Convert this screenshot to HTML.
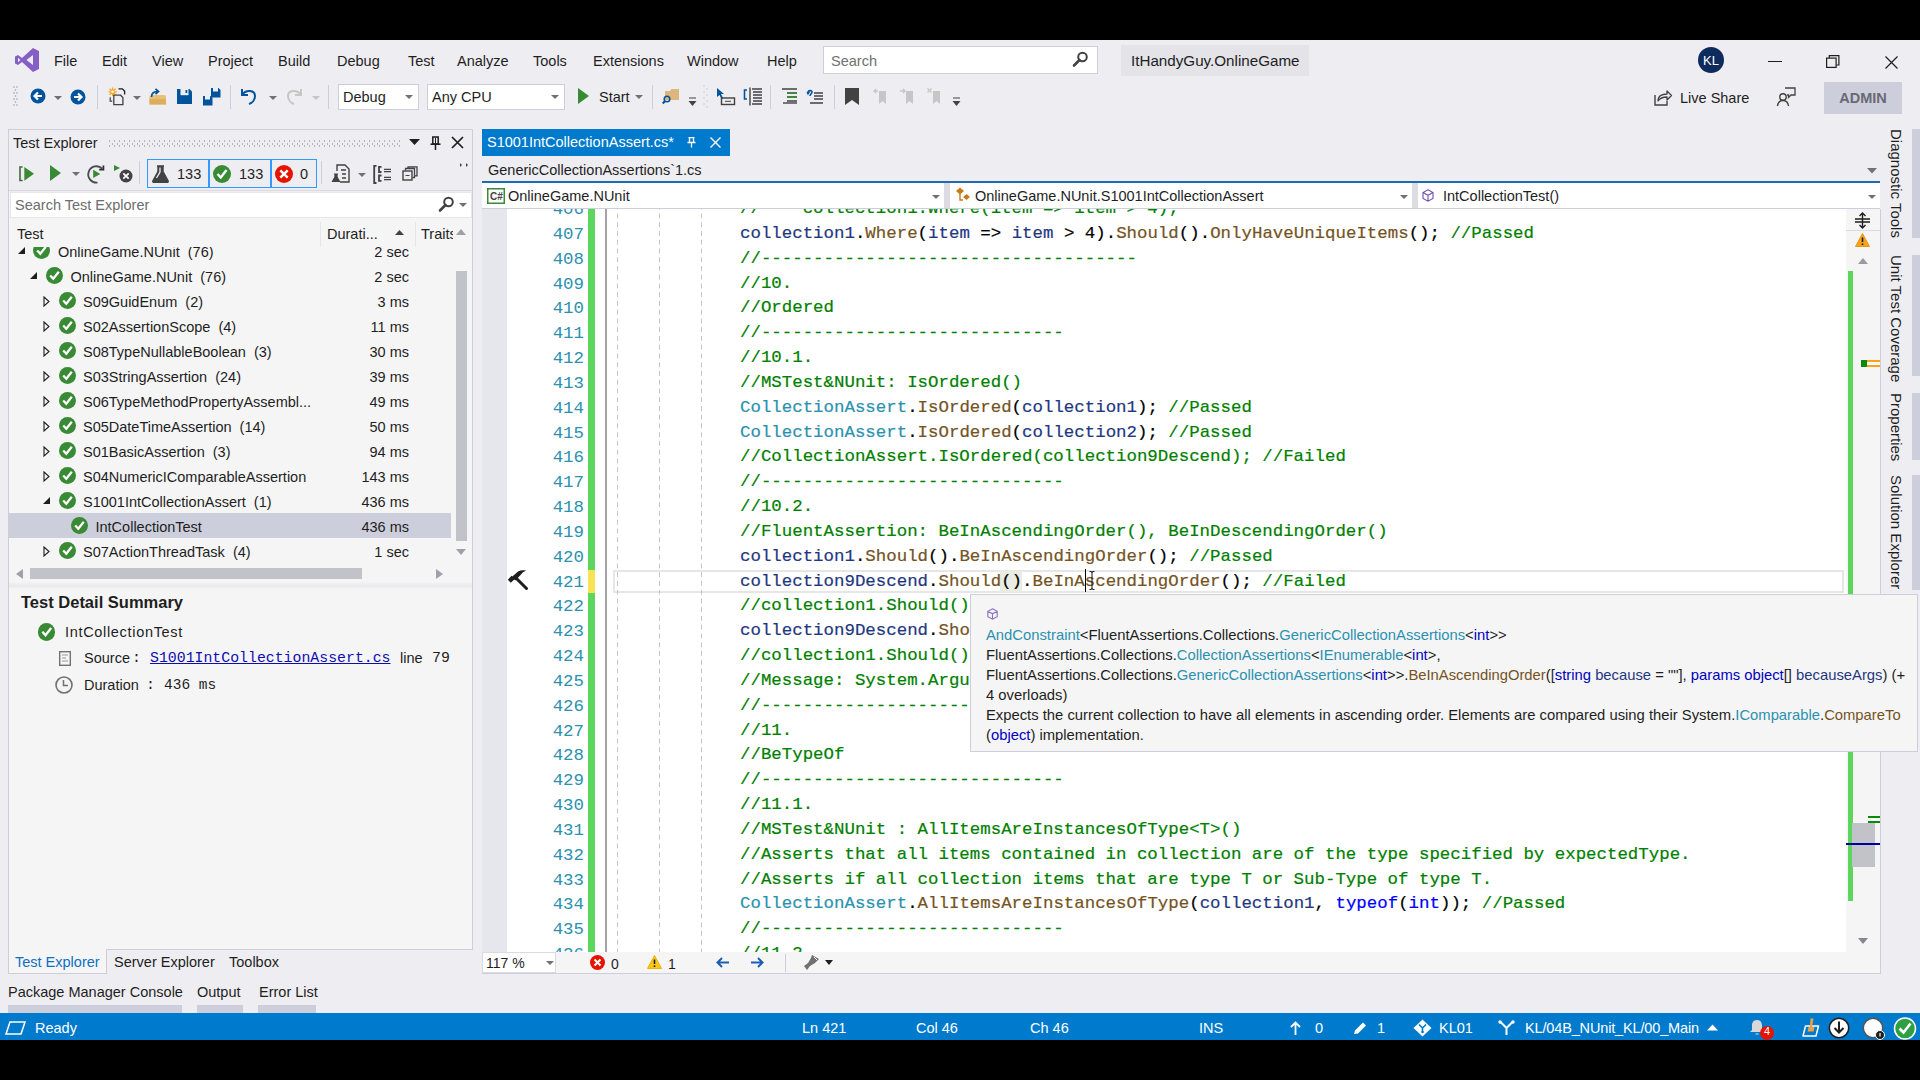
<!DOCTYPE html>
<html><head><meta charset="utf-8">
<style>
*{margin:0;padding:0;box-sizing:border-box}
html,body{width:1920px;height:1080px;overflow:hidden;background:#000}
body{position:relative;font-family:"Liberation Sans",sans-serif;color:#1E1E1E}
.a{position:absolute}
.t{position:absolute;white-space:pre;line-height:20px;font-size:14.5px}
svg{position:absolute;overflow:visible}
#chrome{position:absolute;left:0;top:40px;width:1920px;height:1000px;background:#EEEEF2}
.code{position:absolute;font-family:"Liberation Mono",monospace;font-size:17.42px;-webkit-text-stroke:0.2px currentColor;white-space:pre;line-height:25px;left:258px}
.ln{position:absolute;font-family:"Liberation Mono",monospace;font-size:17.42px;white-space:pre;line-height:25px;color:#2B91AF;text-align:right;width:80px;left:22px}
.id{color:#1F377F}.m{color:#74531F}.c{color:#008000}.k{color:#0000FF}.ty{color:#2B91AF}.p{color:#000}
.dd{position:absolute;width:0;height:0;border-left:4px solid transparent;border-right:4px solid transparent;border-top:4px solid #717171}
.sep{position:absolute;width:1px;height:24px;background:#CCCEDB}
.row{position:absolute;left:0;width:440px;height:25px}
.ck{position:absolute;width:17px;height:17px;border-radius:50%;background:#388A34}
.ck:after{content:"";position:absolute;left:5px;top:2.5px;width:4px;height:8px;border:solid #fff;border-width:0 2.4px 2.4px 0;transform:rotate(40deg)}
.tri{position:absolute;width:0;height:0}
.tl{position:absolute;left:0;white-space:pre}
.tc{position:absolute;font-size:15px;white-space:pre;line-height:20px}
</style></head><body>
<div id="chrome"></div>
<!-- ===== MENU BAR ===== -->
<svg style="left:15px;top:47px" width="25" height="26" viewBox="0 0 25 26">
<path d="M18 1 L24 4 V22 L18 25 L7 15 L3 18 L0 16.5 V9.5 L3 8 L7 11 Z M18 8 L11.5 13 L18 18 Z M3 10.8 V15.2 L5.4 13 Z" fill="#865FC5" fill-rule="evenodd"/>
</svg>
<div class="t" style="left:54px;top:51px">File</div>
<div class="t" style="left:102px;top:51px">Edit</div>
<div class="t" style="left:152px;top:51px">View</div>
<div class="t" style="left:208px;top:51px">Project</div>
<div class="t" style="left:278px;top:51px">Build</div>
<div class="t" style="left:337px;top:51px">Debug</div>
<div class="t" style="left:408px;top:51px">Test</div>
<div class="t" style="left:457px;top:51px">Analyze</div>
<div class="t" style="left:533px;top:51px">Tools</div>
<div class="t" style="left:593px;top:51px">Extensions</div>
<div class="t" style="left:687px;top:51px">Window</div>
<div class="t" style="left:767px;top:51px">Help</div>
<div class="a" style="left:823px;top:46px;width:275px;height:28px;background:#fff;border:1px solid #CCCEDB"></div>
<div class="t" style="left:831px;top:51px;color:#717171">Search</div>
<svg style="left:1071px;top:51px" width="18" height="18" viewBox="0 0 18 18"><circle cx="11.5" cy="6" r="4.3" fill="none" stroke="#424242" stroke-width="2"/><path d="M8.5 9 L3 14.5" stroke="#424242" stroke-width="2.6" stroke-linecap="round"/></svg>
<div class="a" style="left:1121px;top:45px;width:188px;height:31px;background:#E3E3E8"></div>
<div class="t" style="left:1131px;top:51px;font-size:15.2px">ItHandyGuy.OnlineGame</div>
<div class="a" style="left:1698px;top:47px;width:26px;height:26px;border-radius:50%;background:#0E2B5E"></div>
<div class="t" style="left:1702px;top:51px;font-size:13px;color:#fff;width:18px;text-align:center">KL</div>
<div class="a" style="left:1768px;top:61px;width:14px;height:1px;background:#1E1E1E"></div>
<svg style="left:1826px;top:55px" width="14" height="13" viewBox="0 0 14 13"><rect x="0.6" y="3.1" width="9.5" height="9.3" fill="none" stroke="#1E1E1E" stroke-width="1.2"/><path d="M3.3 3 V0.6 H12.9 V10 H10.2" fill="none" stroke="#1E1E1E" stroke-width="1.2"/></svg>
<svg style="left:1885px;top:56px" width="13" height="13" viewBox="0 0 13 13"><path d="M0.5 0.5 L12.5 12.5 M12.5 0.5 L0.5 12.5" stroke="#1E1E1E" stroke-width="1.2"/></svg>

<!-- ===== TOOLBAR ===== -->
<svg style="left:13px;top:86px" width="6" height="22" viewBox="0 0 6 22"><g fill="#A0A0A8"><circle cx="1" cy="1" r=".8"/><circle cx="4" cy="1" r=".8"/><circle cx="2.5" cy="4" r=".8"/><circle cx="1" cy="7" r=".8"/><circle cx="4" cy="7" r=".8"/><circle cx="2.5" cy="10" r=".8"/><circle cx="1" cy="13" r=".8"/><circle cx="4" cy="13" r=".8"/><circle cx="2.5" cy="16" r=".8"/><circle cx="1" cy="19" r=".8"/><circle cx="4" cy="19" r=".8"/></g></svg>
<svg style="left:30px;top:88px" width="16" height="16" viewBox="0 0 16 16"><circle cx="8" cy="8" r="7.5" fill="#00539C"/><path d="M12 8 H5 M8 4.5 L4.5 8 L8 11.5" fill="none" stroke="#fff" stroke-width="2.2"/></svg>
<div class="dd" style="left:54px;top:96px"></div>
<svg style="left:70px;top:89px" width="16" height="16" viewBox="0 0 16 16"><circle cx="8" cy="8" r="7.5" fill="#00539C"/><path d="M4 8 H11 M8 4.5 L11.5 8 L8 11.5" fill="none" stroke="#fff" stroke-width="2.2"/></svg>
<div class="sep" style="left:97px;top:85px"></div>
<svg style="left:104px;top:84px" width="24" height="26" viewBox="0 0 24 26"><g stroke="#F5A623" stroke-width="1.3"><path d="M8.6 3.6 V12 M4.4 7.8 H12.8 M5.6 4.8 L11.6 10.8 M11.6 4.8 L5.6 10.8"/></g><circle cx="8.6" cy="7.8" r="1.3" fill="#FFF5D0"/><path d="M14.5 4.8 H18.3 L20.6 7.1 V10.5" fill="none" stroke="#1E1E1E" stroke-width="1.3"/><path d="M9.8 11.2 H16.6 L18.9 13.5 V20.6 H9.8 Z" fill="#EEEEF2" stroke="#424242" stroke-width="1.3"/><path d="M6.2 13.2 V17.2 H8.2" fill="none" stroke="#424242" stroke-width="1.2"/></svg>
<div class="dd" style="left:133px;top:96px"></div>
<svg style="left:148px;top:87px" width="20" height="19" viewBox="0 0 20 19"><path d="M1.5 10 Q1.5 8 3.5 8 H16 Q18 8 18 10 V17.5 H1.5 Z" fill="#E8C07A"/><path d="M1.5 12 H18 V17.5 H1.5 Z" fill="#DDAE5E"/><path d="M3.5 10 C3.5 6 6 4.5 10 4.5 M7.5 1.8 L10.5 4.5 L7.5 7.2" fill="none" stroke="#00539C" stroke-width="1.7"/></svg>
<svg style="left:177px;top:89px" width="16" height="16" viewBox="0 0 16 16"><path d="M0 0 H12.5 L15 2.5 V15 H0 Z" fill="#00539C"/><rect x="3.5" y="0" width="8" height="6.2" fill="#EEEEF2"/><rect x="8.5" y="1" width="1.8" height="3" fill="#00539C"/></svg>
<svg style="left:202px;top:87px" width="19" height="19" viewBox="0 0 19 19"><path d="M9 1 H16.5 L18.5 3 V10.5 H9 Z" fill="#00539C"/><rect x="11" y="1" width="5" height="3.5" fill="#EEEEF2"/><path d="M1 9 H8.5 L10.5 11 V18.5 H1 Z" fill="#00539C"/><rect x="3" y="9" width="5" height="3.5" fill="#EEEEF2"/></svg>
<div class="sep" style="left:230px;top:85px"></div>
<svg style="left:240px;top:87px" width="17" height="18" viewBox="0 0 17 18"><path d="M2 2 V8 H8 M2 8 C6 2 15 3 15 9 C15 13 12 16 9 17" fill="none" stroke="#00539C" stroke-width="2"/></svg>
<div class="dd" style="left:269px;top:96px"></div>
<svg style="left:286px;top:87px" width="17" height="18" viewBox="0 0 17 18"><path d="M15 2 V8 H9 M15 8 C11 2 2 3 2 9 C2 13 5 16 8 17" fill="none" stroke="#C6C6C6" stroke-width="2"/></svg>
<div class="dd" style="left:312px;top:96px;border-top-color:#C6C6C6"></div>
<div class="sep" style="left:328px;top:85px"></div>
<div class="a" style="left:338px;top:84px;width:81px;height:26px;background:#fff;border:1px solid #CCCEDB"></div>
<div class="t" style="left:343px;top:87px">Debug</div>
<div class="dd" style="left:405px;top:95px"></div>
<div class="a" style="left:427px;top:84px;width:138px;height:26px;background:#fff;border:1px solid #CCCEDB"></div>
<div class="t" style="left:432px;top:87px">Any CPU</div>
<div class="dd" style="left:551px;top:95px"></div>
<svg style="left:578px;top:88px" width="11" height="16" viewBox="0 0 11 16"><path d="M0 0 L11 8 L0 16 Z" fill="#388A34"/></svg>
<div class="t" style="left:599px;top:87px">Start</div>
<div class="dd" style="left:635px;top:95px"></div>
<div class="sep" style="left:652px;top:85px"></div>
<svg style="left:662px;top:87px" width="18" height="18" viewBox="0 0 18 18"><path d="M3 4 H8 L9.5 2 H17 V13 H3 Z" fill="#DCB67A"/><circle cx="5" cy="12" r="2.8" fill="none" stroke="#00539C" stroke-width="1.5"/><path d="M3 14 L0.8 16.5" stroke="#00539C" stroke-width="2"/></svg>
<svg style="left:688px;top:97px" width="9" height="10" viewBox="0 0 9 10"><path d="M1 1 H8" stroke="#424242" stroke-width="1"/><path d="M0.5 4 H8.5 L4.5 9 Z" fill="#424242"/></svg>
<svg style="left:703px;top:85px" width="5" height="24" viewBox="0 0 5 24"><g fill="#BDBDC5"><circle cx="1" cy="1" r=".7"/><circle cx="4" cy="4" r=".7"/><circle cx="1" cy="7" r=".7"/><circle cx="4" cy="10" r=".7"/><circle cx="1" cy="13" r=".7"/><circle cx="4" cy="16" r=".7"/><circle cx="1" cy="19" r=".7"/><circle cx="4" cy="22" r=".7"/></g></svg>
<svg style="left:716px;top:87px" width="20" height="19" viewBox="0 0 20 19"><path d="M1 1 L1 10 L3.5 8 L5.5 12 L7 11 L5 7 L8 7 Z" fill="#00539C"/><rect x="5.5" y="11" width="13" height="6.5" fill="none" stroke="#424242" stroke-width="1.4"/><path d="M9 14.3 H15" stroke="#424242" stroke-width="1"/></svg>
<svg style="left:743px;top:87px" width="20" height="19" viewBox="0 0 20 19"><path d="M4 3 H1.5 V12 H4" fill="none" stroke="#00539C" stroke-width="1.6"/><path d="M7 0.5 V18.5" stroke="#424242" stroke-width="1.4"/><path d="M9 2 H19 M10 5 H19 M10 8 H19 M10 11 H19 M10 14 H19 M9 17 H19" stroke="#424242" stroke-width="1.3"/></svg>
<div class="sep" style="left:770px;top:85px"></div>
<svg style="left:781px;top:88px" width="17" height="16" viewBox="0 0 17 16"><path d="M1 1 H16 M6 5 H16 M6 9 H16 M6 13 H16" stroke="#424242" stroke-width="1.4"/><path d="M6 5 H16 M6 9 H16" stroke="#388A34" stroke-width="1.4"/><path d="M2 15 H16" stroke="#424242" stroke-width="1.4"/></svg>
<svg style="left:806px;top:88px" width="18" height="16" viewBox="0 0 18 16"><path d="M2 5 C2 2 6 2 6 4 C6 6 4 6 4 8" fill="none" stroke="#00539C" stroke-width="1.6"/><path d="M1 4 L2 6 L3.5 4" fill="none" stroke="#00539C" stroke-width="1.2"/><path d="M8 5 H17 M8 8 H17 M8 11 H17 M4 15 H17" stroke="#424242" stroke-width="1.4"/></svg>
<div class="sep" style="left:834px;top:85px"></div>
<svg style="left:845px;top:88px" width="14" height="17" viewBox="0 0 14 17"><path d="M0 0 H14 V17 L7 12 L0 17 Z" fill="#424242"/></svg>
<svg style="left:873px;top:88px" width="15" height="17" viewBox="0 0 15 17"><path d="M6 3 H13 V16 L9.5 13 L6 16 Z" fill="#C6C6C6"/><path d="M5 3 H1 M3 1 L1 3 L3 5" fill="none" stroke="#C6C6C6" stroke-width="1.4"/></svg>
<svg style="left:900px;top:88px" width="15" height="17" viewBox="0 0 15 17"><path d="M6 3 H13 V16 L9.5 13 L6 16 Z" fill="#C6C6C6"/><path d="M0 3 H5 M3 1 L5 3 L3 5" fill="none" stroke="#C6C6C6" stroke-width="1.4"/></svg>
<svg style="left:927px;top:88px" width="15" height="17" viewBox="0 0 15 17"><path d="M6 3 H13 V16 L9.5 13 L6 16 Z" fill="#C6C6C6"/><path d="M0.5 0.5 L4.5 4.5 M4.5 0.5 L0.5 4.5" stroke="#C6C6C6" stroke-width="1.3"/></svg>
<svg style="left:952px;top:97px" width="9" height="10" viewBox="0 0 9 10"><path d="M1 1 H8" stroke="#424242" stroke-width="1"/><path d="M0.5 4 H8.5 L4.5 9 Z" fill="#424242"/></svg>
<!-- right side of toolbar -->
<svg style="left:1654px;top:89px" width="18" height="17" viewBox="0 0 18 17"><path d="M1 6 V16 H13 V12" fill="none" stroke="#424242" stroke-width="1.4"/><path d="M4 12 C4 7 8 5 13 5 V2 L17.5 6.5 L13 11 V8 C9 8 6 9 4 12 Z" fill="none" stroke="#424242" stroke-width="1.3" stroke-linejoin="round"/></svg>
<div class="t" style="left:1680px;top:88px">Live Share</div>
<svg style="left:1776px;top:87px" width="20" height="20" viewBox="0 0 20 20"><circle cx="7" cy="10" r="3.2" fill="none" stroke="#424242" stroke-width="1.4"/><path d="M1.5 19 C2 15 4 13.5 7 13.5 C10 13.5 12 15 12.5 19" fill="none" stroke="#424242" stroke-width="1.4"/><path d="M9 1 H19 V8 H15 L12.5 10.5 V8 H11" fill="none" stroke="#424242" stroke-width="1.3"/></svg>
<div class="a" style="left:1824px;top:82px;width:78px;height:32px;background:#CCCEDB"></div>
<div class="t" style="left:1824px;top:88px;width:78px;text-align:center;font-weight:bold;color:#696974;font-size:14.5px">ADMIN</div>
<!-- ===== TEST EXPLORER ===== -->
<div class="a" style="left:8px;top:129px;width:465px;height:821px;border:1px solid #CCCEDB;background:#F5F5F5"></div>
<div class="a" style="left:9px;top:130px;width:463px;height:62px;background:#EEEEF2"></div>
<div class="t" style="left:13px;top:133px">Test Explorer</div>
<div class="a" style="left:107px;top:140px;width:293px;height:2px;background-image:radial-gradient(circle,#B4B4BC 0.8px,transparent 1.1px);background-size:5px 2px"></div><div class="a" style="left:109.5px;top:142.5px;width:290px;height:2px;background-image:radial-gradient(circle,#B4B4BC 0.8px,transparent 1.1px);background-size:5px 2px"></div><div class="a" style="left:107px;top:145px;width:293px;height:2px;background-image:radial-gradient(circle,#B4B4BC 0.8px,transparent 1.1px);background-size:5px 2px"></div>
<svg style="left:409px;top:139px" width="11" height="7" viewBox="0 0 11 7"><path d="M0 0 H11 L5.5 6 Z" fill="#1E1E1E"/></svg>
<svg style="left:430px;top:136px" width="11" height="15" viewBox="0 0 11 15"><path d="M2.8 1 H8.2 V8 H2.8 Z" fill="none" stroke="#1E1E1E" stroke-width="1.5"/><path d="M5.5 1.5 V7.5" stroke="#1E1E1E" stroke-width="1"/><path d="M0.5 8.2 H10.5" stroke="#1E1E1E" stroke-width="1.6"/><path d="M5.5 8.5 V14" stroke="#1E1E1E" stroke-width="1.5"/></svg>
<svg style="left:451px;top:136px" width="13" height="13" viewBox="0 0 13 13"><path d="M1 1 L12 12 M12 1 L1 12" stroke="#1E1E1E" stroke-width="1.7"/></svg>
<!-- TE toolbar -->
<svg style="left:18px;top:166px" width="17" height="16" viewBox="0 0 17 16"><path d="M4.6 1 H2 V14.5 H4.6" fill="none" stroke="#3F6A3F" stroke-width="1.6"/><path d="M6.3 1 L16 7.8 L6.3 14.8 Z" fill="#388A34"/></svg>
<svg style="left:50px;top:165px" width="11" height="16" viewBox="0 0 11 16"><path d="M0 0 L11 8 L0 16 Z" fill="#388A34"/></svg>
<div class="dd" style="left:72px;top:172px"></div>
<svg style="left:87px;top:165px" width="18" height="19" viewBox="0 0 18 19"><path d="M10.5 17.6 A8.2 8.2 0 1 1 15.2 3.6" fill="none" stroke="#4A4A52" stroke-width="1.8"/><path d="M12.2 4.6 H16.4 V0.4" fill="none" stroke="#2E2E36" stroke-width="1.8"/><path d="M6.2 4.7 L13.3 8.9 L6.2 13 Z" fill="#388A34"/></svg>
<svg style="left:114px;top:164px" width="19" height="19" viewBox="0 0 19 19"><path d="M0 1 L6 4 L0 7 Z" fill="#388A34"/><circle cx="12" cy="12" r="6.5" fill="#424242"/><path d="M9.3 9.3 L14.7 14.7 M14.7 9.3 L9.3 14.7" stroke="#fff" stroke-width="1.8"/></svg>
<div class="sep" style="left:139px;top:161px;height:23px"></div>
<div class="a" style="left:147px;top:159px;width:170px;height:29px;border:1px solid #3399FF;background:#EEEEF2"></div>
<div class="a" style="left:208px;top:160px;width:2px;height:27px;background:#3399FF"></div>
<div class="a" style="left:270px;top:160px;width:2px;height:27px;background:#3399FF"></div>
<svg style="left:152px;top:165px" width="17" height="18" viewBox="0 0 17 18"><path d="M5 1 H12 M6 1 V6.5 L0.8 16 Q0.5 17.3 2 17.3 H15 Q16.5 17.3 16.2 16 L11 6.5 V1" fill="#424242" stroke="#424242" stroke-width="1.4" stroke-linejoin="round"/><path d="M8 2.5 V7 L4.5 13" fill="none" stroke="#EEEEF2" stroke-width="1.3"/></svg>
<div class="t" style="left:177px;top:164px">133</div>
<div class="a" style="left:213px;top:165px;width:18px;height:18px;border-radius:50%;background:#388A34"></div>
<svg style="left:213px;top:165px" width="18" height="18" viewBox="0 0 18 18"><path d="M4.5 9 L7.8 12.5 L13.5 5" fill="none" stroke="#fff" stroke-width="2.4"/></svg>
<div class="t" style="left:239px;top:164px">133</div>
<div class="a" style="left:275px;top:165px;width:18px;height:18px;border-radius:50%;background:#E51400"></div>
<svg style="left:275px;top:165px" width="18" height="18" viewBox="0 0 18 18"><path d="M5.3 5.3 L12.7 12.7 M12.7 5.3 L5.3 12.7" stroke="#fff" stroke-width="2.4"/></svg>
<div class="t" style="left:300px;top:164px">0</div>
<div class="sep" style="left:321px;top:161px;height:23px"></div>
<svg style="left:332px;top:164px" width="19" height="19" viewBox="0 0 19 19"><path d="M5 7 V1 H13 L17 5 V18 H8" fill="none" stroke="#424242" stroke-width="1.4"/><path d="M9 6 H14 M10 10 H14 M10 14 H14" stroke="#424242" stroke-width="1.3"/><path d="M2 10 H6 M3 10 V13 L0.5 17.5 H7.5 L5 13 V10" fill="#424242" stroke="#424242" stroke-width="1.2"/></svg>
<div class="dd" style="left:358px;top:173px"></div>
<svg style="left:373px;top:165px" width="19" height="19" viewBox="0 0 19 19"><path d="M3.5 0.8 H1.2 V18 H3.5" fill="none" stroke="#424242" stroke-width="1.8"/><path d="M8.5 1.8 H6 V7 H8.5 M8.5 10.5 H6 V15.8 H8.5" fill="none" stroke="#424242" stroke-width="1.8"/><path d="M11 4.3 H18 M11 6.6 H18 M11 12.3 H18 M11 14.6 H18" stroke="#424242" stroke-width="1.2"/></svg>
<svg style="left:402px;top:166px" width="16" height="15" viewBox="0 0 16 15"><rect x="1" y="5" width="9" height="9" fill="none" stroke="#424242" stroke-width="1.4"/><path d="M3.5 4.5 V2.5 H12.5 V11.5 H10.5 M6 2 V0.8 H15 V9.8 H13" fill="none" stroke="#424242" stroke-width="1.3"/><path d="M3.5 9.5 H7.5" stroke="#424242" stroke-width="1"/></svg>
<svg style="left:460px;top:163px" width="9" height="4" viewBox="0 0 9 4"><path d="M0 0 L2 2 L0 4 Z M6 0 L8 2 L6 4 Z" fill="#424242"/></svg>
<div class="a" style="left:9px;top:190px;width:463px;height:1px;background:#DADAE0"></div>
<!-- search -->
<div class="a" style="left:10px;top:192px;width:462px;height:26px;background:#fff;border:1px solid #E6E6EB"></div>
<div class="t" style="left:15px;top:195px;color:#6D6D6D">Search Test Explorer</div>
<svg style="left:437px;top:196px" width="18" height="18" viewBox="0 0 18 18"><circle cx="11.5" cy="6" r="4.3" fill="none" stroke="#424242" stroke-width="2"/><path d="M8.5 9 L3 14.5" stroke="#424242" stroke-width="2.6" stroke-linecap="round"/></svg>
<div class="dd" style="left:459px;top:203px"></div>
<!-- header -->
<div class="a" style="left:9px;top:219px;width:463px;height:28px;background:#F5F5F5"></div>
<div class="t" style="left:17px;top:224px">Test</div>
<div class="a" style="left:320px;top:222px;width:1px;height:25px;background:#E5E5EA"></div>
<div class="t" style="left:327px;top:224px">Durati...</div>
<svg style="left:395px;top:230px" width="9" height="5" viewBox="0 0 9 5"><path d="M0 5 L4.5 0 L9 5 Z" fill="#424242"/></svg>
<div class="a" style="left:415px;top:222px;width:1px;height:25px;background:#E5E5EA"></div>
<div class="t" style="left:421px;top:224px;width:32px;overflow:hidden">Traits</div>
<div class="a" style="left:9px;top:247px;width:446px;height:318px;overflow:hidden">
<svg style="left:8.5px;top:0px" width="8" height="8" viewBox="0 0 8 8"><path d="M7 0 V7 H0 Z" fill="#1E1E1E"/></svg>
<div class="a" style="left:24.2px;top:-4.699999999999999px;width:17px;height:17px;border-radius:50%;background:#388A34"></div>
<svg style="left:24.2px;top:-4.699999999999999px" width="17" height="17" viewBox="0 0 17 17"><path d="M4.2 8.5 L7.3 11.8 L12.8 4.8" fill="none" stroke="#fff" stroke-width="2.3"/></svg>
<div class="t" style="left:49.0px;top:-5px">OnlineGame.NUnit  (76)</div>
<div class="t" style="left:291px;top:-5px;width:109px;text-align:right">2 sec</div>
<svg style="left:21.0px;top:25px" width="8" height="8" viewBox="0 0 8 8"><path d="M7 0 V7 H0 Z" fill="#1E1E1E"/></svg>
<div class="a" style="left:36.9px;top:20.3px;width:17px;height:17px;border-radius:50%;background:#388A34"></div>
<svg style="left:36.9px;top:20.3px" width="17" height="17" viewBox="0 0 17 17"><path d="M4.2 8.5 L7.3 11.8 L12.8 4.8" fill="none" stroke="#fff" stroke-width="2.3"/></svg>
<div class="t" style="left:61.5px;top:20px">OnlineGame.NUnit  (76)</div>
<div class="t" style="left:291px;top:20px;width:109px;text-align:right">2 sec</div>
<svg style="left:33.5px;top:49px" width="7" height="11" viewBox="0 0 7 11"><path d="M1 1 L6 5.5 L1 10 Z" fill="none" stroke="#1E1E1E" stroke-width="1.1"/></svg>
<div class="a" style="left:49.6px;top:45.3px;width:17px;height:17px;border-radius:50%;background:#388A34"></div>
<svg style="left:49.6px;top:45.3px" width="17" height="17" viewBox="0 0 17 17"><path d="M4.2 8.5 L7.3 11.8 L12.8 4.8" fill="none" stroke="#fff" stroke-width="2.3"/></svg>
<div class="t" style="left:74.0px;top:45px">S09GuidEnum  (2)</div>
<div class="t" style="left:291px;top:45px;width:109px;text-align:right">3 ms</div>
<svg style="left:33.5px;top:74px" width="7" height="11" viewBox="0 0 7 11"><path d="M1 1 L6 5.5 L1 10 Z" fill="none" stroke="#1E1E1E" stroke-width="1.1"/></svg>
<div class="a" style="left:49.6px;top:70.3px;width:17px;height:17px;border-radius:50%;background:#388A34"></div>
<svg style="left:49.6px;top:70.3px" width="17" height="17" viewBox="0 0 17 17"><path d="M4.2 8.5 L7.3 11.8 L12.8 4.8" fill="none" stroke="#fff" stroke-width="2.3"/></svg>
<div class="t" style="left:74.0px;top:70px">S02AssertionScope  (4)</div>
<div class="t" style="left:291px;top:70px;width:109px;text-align:right">11 ms</div>
<svg style="left:33.5px;top:99px" width="7" height="11" viewBox="0 0 7 11"><path d="M1 1 L6 5.5 L1 10 Z" fill="none" stroke="#1E1E1E" stroke-width="1.1"/></svg>
<div class="a" style="left:49.6px;top:95.3px;width:17px;height:17px;border-radius:50%;background:#388A34"></div>
<svg style="left:49.6px;top:95.3px" width="17" height="17" viewBox="0 0 17 17"><path d="M4.2 8.5 L7.3 11.8 L12.8 4.8" fill="none" stroke="#fff" stroke-width="2.3"/></svg>
<div class="t" style="left:74.0px;top:95px">S08TypeNullableBoolean  (3)</div>
<div class="t" style="left:291px;top:95px;width:109px;text-align:right">30 ms</div>
<svg style="left:33.5px;top:124px" width="7" height="11" viewBox="0 0 7 11"><path d="M1 1 L6 5.5 L1 10 Z" fill="none" stroke="#1E1E1E" stroke-width="1.1"/></svg>
<div class="a" style="left:49.6px;top:120.3px;width:17px;height:17px;border-radius:50%;background:#388A34"></div>
<svg style="left:49.6px;top:120.3px" width="17" height="17" viewBox="0 0 17 17"><path d="M4.2 8.5 L7.3 11.8 L12.8 4.8" fill="none" stroke="#fff" stroke-width="2.3"/></svg>
<div class="t" style="left:74.0px;top:120px">S03StringAssertion  (24)</div>
<div class="t" style="left:291px;top:120px;width:109px;text-align:right">39 ms</div>
<svg style="left:33.5px;top:149px" width="7" height="11" viewBox="0 0 7 11"><path d="M1 1 L6 5.5 L1 10 Z" fill="none" stroke="#1E1E1E" stroke-width="1.1"/></svg>
<div class="a" style="left:49.6px;top:145.3px;width:17px;height:17px;border-radius:50%;background:#388A34"></div>
<svg style="left:49.6px;top:145.3px" width="17" height="17" viewBox="0 0 17 17"><path d="M4.2 8.5 L7.3 11.8 L12.8 4.8" fill="none" stroke="#fff" stroke-width="2.3"/></svg>
<div class="t" style="left:74.0px;top:145px">S06TypeMethodPropertyAssembl...</div>
<div class="t" style="left:291px;top:145px;width:109px;text-align:right">49 ms</div>
<svg style="left:33.5px;top:174px" width="7" height="11" viewBox="0 0 7 11"><path d="M1 1 L6 5.5 L1 10 Z" fill="none" stroke="#1E1E1E" stroke-width="1.1"/></svg>
<div class="a" style="left:49.6px;top:170.3px;width:17px;height:17px;border-radius:50%;background:#388A34"></div>
<svg style="left:49.6px;top:170.3px" width="17" height="17" viewBox="0 0 17 17"><path d="M4.2 8.5 L7.3 11.8 L12.8 4.8" fill="none" stroke="#fff" stroke-width="2.3"/></svg>
<div class="t" style="left:74.0px;top:170px">S05DateTimeAssertion  (14)</div>
<div class="t" style="left:291px;top:170px;width:109px;text-align:right">50 ms</div>
<svg style="left:33.5px;top:199px" width="7" height="11" viewBox="0 0 7 11"><path d="M1 1 L6 5.5 L1 10 Z" fill="none" stroke="#1E1E1E" stroke-width="1.1"/></svg>
<div class="a" style="left:49.6px;top:195.3px;width:17px;height:17px;border-radius:50%;background:#388A34"></div>
<svg style="left:49.6px;top:195.3px" width="17" height="17" viewBox="0 0 17 17"><path d="M4.2 8.5 L7.3 11.8 L12.8 4.8" fill="none" stroke="#fff" stroke-width="2.3"/></svg>
<div class="t" style="left:74.0px;top:195px">S01BasicAssertion  (3)</div>
<div class="t" style="left:291px;top:195px;width:109px;text-align:right">94 ms</div>
<svg style="left:33.5px;top:224px" width="7" height="11" viewBox="0 0 7 11"><path d="M1 1 L6 5.5 L1 10 Z" fill="none" stroke="#1E1E1E" stroke-width="1.1"/></svg>
<div class="a" style="left:49.6px;top:220.3px;width:17px;height:17px;border-radius:50%;background:#388A34"></div>
<svg style="left:49.6px;top:220.3px" width="17" height="17" viewBox="0 0 17 17"><path d="M4.2 8.5 L7.3 11.8 L12.8 4.8" fill="none" stroke="#fff" stroke-width="2.3"/></svg>
<div class="t" style="left:74.0px;top:220px">S04NumericIComparableAssertion</div>
<div class="t" style="left:291px;top:220px;width:109px;text-align:right">143 ms</div>
<svg style="left:33.5px;top:250px" width="8" height="8" viewBox="0 0 8 8"><path d="M7 0 V7 H0 Z" fill="#1E1E1E"/></svg>
<div class="a" style="left:49.6px;top:245.3px;width:17px;height:17px;border-radius:50%;background:#388A34"></div>
<svg style="left:49.6px;top:245.3px" width="17" height="17" viewBox="0 0 17 17"><path d="M4.2 8.5 L7.3 11.8 L12.8 4.8" fill="none" stroke="#fff" stroke-width="2.3"/></svg>
<div class="t" style="left:74.0px;top:245px">S1001IntCollectionAssert  (1)</div>
<div class="t" style="left:291px;top:245px;width:109px;text-align:right">436 ms</div>
<div class="a" style="left:0px;top:266px;width:442px;height:24.5px;background:#CCCEDB"></div>
<div class="a" style="left:61.7px;top:270.3px;width:17px;height:17px;border-radius:50%;background:#388A34"></div>
<svg style="left:61.7px;top:270.3px" width="17" height="17" viewBox="0 0 17 17"><path d="M4.2 8.5 L7.3 11.8 L12.8 4.8" fill="none" stroke="#fff" stroke-width="2.3"/></svg>
<div class="t" style="left:86.5px;top:270px">IntCollectionTest</div>
<div class="t" style="left:291px;top:270px;width:109px;text-align:right">436 ms</div>
<svg style="left:33.5px;top:299px" width="7" height="11" viewBox="0 0 7 11"><path d="M1 1 L6 5.5 L1 10 Z" fill="none" stroke="#1E1E1E" stroke-width="1.1"/></svg>
<div class="a" style="left:49.6px;top:295.3px;width:17px;height:17px;border-radius:50%;background:#388A34"></div>
<svg style="left:49.6px;top:295.3px" width="17" height="17" viewBox="0 0 17 17"><path d="M4.2 8.5 L7.3 11.8 L12.8 4.8" fill="none" stroke="#fff" stroke-width="2.3"/></svg>
<div class="t" style="left:74.0px;top:295px">S07ActionThreadTask  (4)</div>
<div class="t" style="left:291px;top:295px;width:109px;text-align:right">1 sec</div>
</div>
<!-- tree scrollbars -->
<svg style="left:456px;top:229px" width="10" height="6" viewBox="0 0 10 6"><path d="M0 6 L5 0 L10 6 Z" fill="#A0A0A8"/></svg>
<div class="a" style="left:456px;top:271px;width:11px;height:270px;background:#C2C3C9"></div>
<svg style="left:456px;top:549px" width="10" height="6" viewBox="0 0 10 6"><path d="M0 0 L5 6 L10 0 Z" fill="#A0A0A8"/></svg>
<svg style="left:16px;top:569px" width="7" height="10" viewBox="0 0 7 10"><path d="M7 0 L0 5 L7 10 Z" fill="#A0A0A8"/></svg>
<div class="a" style="left:30px;top:568px;width:332px;height:11px;background:#C2C3C9"></div>
<svg style="left:436px;top:569px" width="7" height="10" viewBox="0 0 7 10"><path d="M0 0 L7 5 L0 10 Z" fill="#A0A0A8"/></svg>
<div class="a" style="left:9px;top:582px;width:463px;height:7px;background:linear-gradient(#F5F5F5,#E9E9EE 55%,#F5F5F5)"></div>
<!-- detail summary -->
<div class="t" style="left:21px;top:592px;font-size:16.5px;font-weight:bold;line-height:20px">Test Detail Summary</div>
<div class="a" style="left:37.5px;top:623px;width:17.5px;height:17.5px;border-radius:50%;background:#388A34"></div>
<svg style="left:37.5px;top:623px" width="17.5" height="17.5" viewBox="0 0 17 17"><path d="M4.2 8.5 L7.3 11.8 L12.8 4.8" fill="none" stroke="#fff" stroke-width="2.3"/></svg>
<div class="t" style="left:65px;top:622px;letter-spacing:0.68px">IntCollectionTest</div>
<svg style="left:59px;top:651px" width="12" height="15" viewBox="0 0 12 15"><rect x="0.7" y="0.7" width="10.6" height="13.6" fill="none" stroke="#717171" stroke-width="1.4"/><path d="M3 4 H9 M3 7 H7 M3 10 H9" stroke="#9A9A9A" stroke-width="1.2"/></svg>
<div class="t" style="left:84px;top:648px">Source</div><div class="a" style="left:132px;top:648px;font-family:'Liberation Mono',monospace;font-size:14.85px;line-height:20px">:</div>
<div class="a" style="left:150px;top:648px;font-family:'Liberation Mono',monospace;font-size:14.85px;line-height:20px;white-space:pre;color:#0E0EB0;text-decoration:underline">S1001IntCollectionAssert.cs</div>
<div class="t" style="left:400px;top:648px">line</div>
<div class="a" style="left:432px;top:648px;font-family:'Liberation Mono',monospace;font-size:14.85px;line-height:20px;white-space:pre">79</div>
<svg style="left:55px;top:676px" width="18" height="18" viewBox="0 0 18 18"><circle cx="9" cy="9" r="8" fill="none" stroke="#717171" stroke-width="1.6"/><path d="M8.5 4 V9.5 H13" fill="none" stroke="#717171" stroke-width="1.5"/></svg>
<div class="t" style="left:84px;top:675px">Duration</div><div class="a" style="left:146px;top:675px;font-family:'Liberation Mono',monospace;font-size:14.85px;line-height:20px">:</div>
<div class="a" style="left:164px;top:675px;font-family:'Liberation Mono',monospace;font-size:14.5px;line-height:20px;white-space:pre">436 ms</div>
<!-- bottom tool tabs -->
<div class="a" style="left:8px;top:949px;width:99px;height:25px;background:#F5F5F5;border:1px solid #CCCEDB;border-top:none"></div>
<div class="t" style="left:15px;top:952px;color:#0E70C0">Test Explorer</div>
<div class="t" style="left:114px;top:952px">Server Explorer</div>
<div class="t" style="left:229px;top:952px">Toolbox</div>
<div class="t" style="left:8px;top:982px">Package Manager Console</div>
<div class="t" style="left:197px;top:982px">Output</div>
<div class="t" style="left:259px;top:982px">Error List</div>
<div class="a" style="left:8px;top:1005px;width:174px;height:8px;background:#CCCEDB"></div>
<div class="a" style="left:197px;top:1005px;width:46px;height:8px;background:#CCCEDB"></div>
<div class="a" style="left:258px;top:1005px;width:58px;height:8px;background:#CCCEDB"></div>
<!-- ===== EDITOR TABS ===== -->
<div class="a" style="left:482px;top:129px;width:248px;height:27px;background:#007ACC"></div>
<div class="t" style="left:487px;top:132px;color:#fff">S1001IntCollectionAssert.cs*</div>
<svg style="left:687px;top:137px" width="9" height="11" viewBox="0 0 9 11"><path d="M1.5 0.7 H7.5 M2.5 0.7 V5.5 H6.5 V0.7 M0.5 5.5 H8.5 M4.5 5.5 V10.5" fill="none" stroke="#fff" stroke-width="1.3"/></svg>
<svg style="left:710px;top:137px" width="11" height="11" viewBox="0 0 11 11"><path d="M0.5 0.5 L10.5 10.5 M10.5 0.5 L0.5 10.5" stroke="#fff" stroke-width="1.4"/></svg>
<svg style="left:1867px;top:168px" width="10" height="6" viewBox="0 0 10 6"><path d="M0 0 H10 L5 5.5 Z" fill="#717171"/></svg>
<div class="t" style="left:488px;top:160px">GenericCollectionAssertions`1.cs</div>
<div class="a" style="left:482px;top:181px;width:1398px;height:2px;background:#1B6CB0"></div>
<!-- nav bar -->
<div class="a" style="left:482px;top:183px;width:1398px;height:26px;background:#fff;border-bottom:1px solid #CCCEDB"></div>
<div class="a" style="left:944px;top:183px;width:6px;height:25px;background:#DCDCE2"></div>
<div class="a" style="left:1412px;top:183px;width:6px;height:25px;background:#DCDCE2"></div>
<svg style="left:487px;top:188px" width="18" height="16" viewBox="0 0 18 16"><rect x="0.75" y="0.75" width="16.5" height="14.5" fill="none" stroke="#388A34" stroke-width="1.5"/><text x="3" y="12" font-family="Liberation Sans" font-size="10" font-weight="bold" fill="#424242">C#</text></svg>
<div class="t" style="left:508px;top:186px">OnlineGame.NUnit</div>
<div class="dd" style="left:932px;top:195px"></div>
<svg style="left:955px;top:187px" width="17" height="17" viewBox="0 0 17 17"><path d="M1 4 L5 0.5 L9 4 L5 7.5 Z" fill="#C27D1A"/><path d="M8 10 L11.5 7 L15 10 L11.5 13 Z" fill="#C27D1A"/><path d="M5 7 V13 H8" fill="none" stroke="#C27D1A" stroke-width="1.4"/></svg>
<div class="t" style="left:975px;top:186px">OnlineGame.NUnit.S1001IntCollectionAssert</div>
<div class="dd" style="left:1400px;top:195px"></div>
<svg style="left:1422px;top:189px" width="12" height="13" viewBox="0 0 12 13"><path d="M6 0.8 L11 3.5 V9.5 L6 12.2 L1 9.5 V3.5 Z M1 3.5 L6 6.3 L11 3.5 M6 6.3 V12.2" fill="none" stroke="#6C4FAF" stroke-width="1.1"/></svg>
<div class="t" style="left:1443px;top:186px">IntCollectionTest()</div>
<div class="dd" style="left:1868px;top:195px"></div>
<!-- ===== CODE AREA ===== -->
<div id="code" class="a" style="left:482px;top:209px;width:1364px;height:743px;background:#fff;overflow:hidden">
<div class="a" style="left:0;top:0;width:25px;height:743px;background:#E6E7ED"></div>
<div class="a" style="left:106px;top:0;width:7px;height:743px;background:#5CD65C"></div>
<div class="a" style="left:106px;top:361px;width:7px;height:23px;background:#F7E354"></div>
<div class="a" style="left:123px;top:0;width:2px;height:743px;background:#A5A5A5"></div>
<div class="a" style="left:131px;top:361px;width:1231px;height:23px;border:2px solid #E6E6E6"></div>
<div class="a" style="left:135px;top:0;width:1px;height:743px;background-image:linear-gradient(#C4C4C4 57%,transparent 57%);background-size:1px 8.75px;background-position:0 4.5px"></div>
<div class="a" style="left:177px;top:0;width:1px;height:743px;background-image:linear-gradient(#C4C4C4 57%,transparent 57%);background-size:1px 8.75px;background-position:0 4.5px"></div>
<div class="a" style="left:219px;top:0;width:1px;height:743px;background-image:linear-gradient(#C4C4C4 57%,transparent 57%);background-size:1px 8.75px;background-position:0 4.5px"></div>
<div class="a" style="left:518px;top:362px;width:22px;height:21px;background:#E9ECE0"></div>
<svg style="left:25px;top:360px" width="22" height="22" viewBox="0 0 22 22"><path d="M8.5 8.5 L19.5 19.5" stroke="#1E1E1E" stroke-width="3" stroke-linecap="round"/><path d="M0.8 10.8 L3.8 13.8 L7.2 10.6 L8.2 11.4 L13.6 6 Q15 3.2 19.2 1.6 Q14.6 0.4 11 2.6 L5.4 7.6 L4.6 6.8 Z" fill="#1E1E1E"/></svg>
<div class="ln" style="top:-11.83px">406</div>
<div class="ln" style="top:13.00px">407</div>
<div class="ln" style="top:37.83px">408</div>
<div class="ln" style="top:62.66px">409</div>
<div class="ln" style="top:87.49px">410</div>
<div class="ln" style="top:112.32px">411</div>
<div class="ln" style="top:137.15px">412</div>
<div class="ln" style="top:161.98px">413</div>
<div class="ln" style="top:186.81px">414</div>
<div class="ln" style="top:211.64px">415</div>
<div class="ln" style="top:236.47px">416</div>
<div class="ln" style="top:261.30px">417</div>
<div class="ln" style="top:286.13px">418</div>
<div class="ln" style="top:310.96px">419</div>
<div class="ln" style="top:335.79px">420</div>
<div class="ln" style="top:360.62px">421</div>
<div class="ln" style="top:385.45px">422</div>
<div class="ln" style="top:410.28px">423</div>
<div class="ln" style="top:435.11px">424</div>
<div class="ln" style="top:459.94px">425</div>
<div class="ln" style="top:484.77px">426</div>
<div class="ln" style="top:509.60px">427</div>
<div class="ln" style="top:534.43px">428</div>
<div class="ln" style="top:559.26px">429</div>
<div class="ln" style="top:584.09px">430</div>
<div class="ln" style="top:608.92px">431</div>
<div class="ln" style="top:633.75px">432</div>
<div class="ln" style="top:658.58px">433</div>
<div class="ln" style="top:683.41px">434</div>
<div class="ln" style="top:708.24px">435</div>
<div class="ln" style="top:733.07px">436</div>
<div class="code" style="top:-12.83px"><span class="c">//    collection1.Where(item =&gt; item &gt; 4);</span></div>
<div class="code" style="top:12.00px"><span class="id">collection1</span><span class="p">.</span><span class="m">Where</span><span class="p">(</span><span class="id">item</span><span class="p"> =&gt; </span><span class="id">item</span><span class="p"> &gt; 4).</span><span class="m">Should</span><span class="p">().</span><span class="m">OnlyHaveUniqueItems</span><span class="p">(); </span><span class="c">//Passed</span></div>
<div class="code" style="top:36.83px"><span class="c">//------------------------------------</span></div>
<div class="code" style="top:61.66px"><span class="c">//10.</span></div>
<div class="code" style="top:86.49px"><span class="c">//Ordered</span></div>
<div class="code" style="top:111.32px"><span class="c">//-----------------------------</span></div>
<div class="code" style="top:136.15px"><span class="c">//10.1.</span></div>
<div class="code" style="top:160.98px"><span class="c">//MSTest&amp;NUnit: IsOrdered()</span></div>
<div class="code" style="top:185.81px"><span class="ty">CollectionAssert</span><span class="p">.</span><span class="m">IsOrdered</span><span class="p">(</span><span class="id">collection1</span><span class="p">); </span><span class="c">//Passed</span></div>
<div class="code" style="top:210.64px"><span class="ty">CollectionAssert</span><span class="p">.</span><span class="m">IsOrdered</span><span class="p">(</span><span class="id">collection2</span><span class="p">); </span><span class="c">//Passed</span></div>
<div class="code" style="top:235.47px"><span class="c">//CollectionAssert.IsOrdered(collection9Descend); //Failed</span></div>
<div class="code" style="top:260.30px"><span class="c">//-----------------------------</span></div>
<div class="code" style="top:285.13px"><span class="c">//10.2.</span></div>
<div class="code" style="top:309.96px"><span class="c">//FluentAssertion: BeInAscendingOrder(), BeInDescendingOrder()</span></div>
<div class="code" style="top:334.79px"><span class="id">collection1</span><span class="p">.</span><span class="m">Should</span><span class="p">().</span><span class="m">BeInAscendingOrder</span><span class="p">(); </span><span class="c">//Passed</span></div>
<div class="code" style="top:359.62px"><span class="id">collection9Descend</span><span class="p">.</span><span class="m">Should</span><span class="p">().</span><span class="m">BeInAscendingOrder</span><span class="p">(); </span><span class="c">//Failed</span></div>
<div class="code" style="top:384.45px"><span class="c">//collection1.Should().BeInDescendingOrder(); //Failed</span></div>
<div class="code" style="top:409.28px"><span class="id">collection9Descend</span><span class="p">.</span><span class="m">Should</span><span class="p">().</span><span class="m">BeInDescendingOrder</span><span class="p">(); </span><span class="c">//Passed</span></div>
<div class="code" style="top:434.11px"><span class="c">//collection1.Should().BeInDescendingOrder(); //Failed</span></div>
<div class="code" style="top:458.94px"><span class="c">//Message: System.ArgumentException</span></div>
<div class="code" style="top:483.77px"><span class="c">//-----------------------------</span></div>
<div class="code" style="top:508.60px"><span class="c">//11.</span></div>
<div class="code" style="top:533.43px"><span class="c">//BeTypeOf</span></div>
<div class="code" style="top:558.26px"><span class="c">//-----------------------------</span></div>
<div class="code" style="top:583.09px"><span class="c">//11.1.</span></div>
<div class="code" style="top:607.92px"><span class="c">//MSTest&amp;NUnit : AllItemsAreInstancesOfType&lt;T&gt;()</span></div>
<div class="code" style="top:632.75px"><span class="c">//Asserts that all items contained in collection are of the type specified by expectedType.</span></div>
<div class="code" style="top:657.58px"><span class="c">//Asserts if all collection items that are type T or Sub-Type of type T.</span></div>
<div class="code" style="top:682.41px"><span class="ty">CollectionAssert</span><span class="p">.</span><span class="m">AllItemsAreInstancesOfType</span><span class="p">(</span><span class="id">collection1</span><span class="p">, </span><span class="k">typeof</span><span class="p">(</span><span class="k">int</span><span class="p">)); </span><span class="c">//Passed</span></div>
<div class="code" style="top:707.24px"><span class="c">//-----------------------------</span></div>
<div class="code" style="top:732.07px"><span class="c">//11.2.</span></div>
<div class="a" style="left:603px;top:360px;width:1px;height:23px;background:#000"></div>
<svg style="left:606px;top:362px" width="8" height="19" viewBox="0 0 8 19"><path d="M1.5 0.5 H3.2 Q4 0.5 4 2 V17 Q4 18.5 3.2 18.5 H1.5 M6.5 0.5 H4.8 Q4 0.5 4 2 M4 17 Q4 18.5 4.8 18.5 H6.5" fill="none" stroke="#000" stroke-width="0.9"/></svg>
</div>
<!-- right scrollbar -->
<div class="a" style="left:1846px;top:209px;width:35px;height:764px;background:#F5F5F5;border-right:1px solid #CCCEDB"></div>
<div class="a" style="left:1846px;top:209px;width:34px;height:22px;border-bottom:1px solid #DADAE0"></div>
<svg style="left:1855px;top:212px" width="15" height="17" viewBox="0 0 15 17"><path d="M0 7 H15 M0 10 H15" stroke="#1E1E1E" stroke-width="1.4"/><path d="M7.5 1 V16 M4.5 4 L7.5 1 L10.5 4 M4.5 13 L7.5 16 L10.5 13" fill="none" stroke="#1E1E1E" stroke-width="1.4"/></svg>
<svg style="left:1855px;top:233px" width="15" height="14" viewBox="0 0 15 14"><path d="M7.5 0.5 L14.5 13.5 H0.5 Z" fill="#F7A21B" stroke="#E8961B" stroke-width="1" stroke-linejoin="round"/><path d="M7.5 4.5 V9" stroke="#1E1E1E" stroke-width="1.6"/><circle cx="7.5" cy="11.2" r=".9" fill="#1E1E1E"/></svg>
<svg style="left:1858px;top:258px" width="10" height="6" viewBox="0 0 10 6"><path d="M0 6 L5 0 L10 6 Z" fill="#9A9AA4"/></svg>
<div class="a" style="left:1848px;top:271px;width:5px;height:630px;background:#5CD65C"></div>
<div class="a" style="left:1861px;top:360px;width:6px;height:7px;background:#0A8A0A"></div>
<div class="a" style="left:1867px;top:360px;width:13px;height:2px;background:#F7A21B"></div>
<div class="a" style="left:1867px;top:365px;width:13px;height:2px;background:#F7A21B"></div>
<div class="a" style="left:1852px;top:823px;width:23px;height:44px;background:#C2C3C9"></div>
<div class="a" style="left:1868px;top:816px;width:12px;height:2px;background:#0A8A0A"></div>
<div class="a" style="left:1868px;top:821px;width:12px;height:2px;background:#0A8A0A"></div>
<div class="a" style="left:1846px;top:843px;width:34px;height:2px;background:#0000A0"></div>
<svg style="left:1858px;top:938px" width="10" height="6" viewBox="0 0 10 6"><path d="M0 0 L5 6 L10 0 Z" fill="#868690"/></svg>
<!-- vertical tool tabs -->
<div class="a" style="left:1912px;top:129px;width:8px;height:109px;background:#CCCEDB"></div>
<div class="a" style="left:1912px;top:255px;width:8px;height:121px;background:#CCCEDB"></div>
<div class="a" style="left:1912px;top:393px;width:8px;height:67px;background:#CCCEDB"></div>
<div class="a" style="left:1912px;top:475px;width:8px;height:115px;background:#CCCEDB"></div>
<div class="t" style="left:1886px;top:129px;transform-origin:0 0;transform:translate(20px,0) rotate(90deg);font-size:15px">Diagnostic Tools</div>
<div class="t" style="left:1886px;top:255px;transform-origin:0 0;transform:translate(20px,0) rotate(90deg);font-size:15px">Unit Test Coverage</div>
<div class="t" style="left:1886px;top:393px;transform-origin:0 0;transform:translate(20px,0) rotate(90deg);font-size:15px">Properties</div>
<div class="t" style="left:1886px;top:475px;transform-origin:0 0;transform:translate(20px,0) rotate(90deg);font-size:15px">Solution Explorer</div>
<!-- editor bottom bar -->
<div class="a" style="left:482px;top:952px;width:1399px;height:22px;background:#F5F5F5;border-bottom:1px solid #CCCEDB;border-right:1px solid #CCCEDB"></div>
<div class="a" style="left:482px;top:952px;width:74px;height:21px;background:#fff;border:1px solid #DADAE0"></div>
<div class="t" style="left:486px;top:953px;font-size:14px">117 %</div>
<div class="dd" style="left:546px;top:961px"></div>
<div class="a" style="left:590px;top:955px;width:15px;height:15px;border-radius:50%;background:#E51400"></div>
<svg style="left:590px;top:955px" width="15" height="15" viewBox="0 0 15 15"><path d="M4.5 4.5 L10.5 10.5 M10.5 4.5 L4.5 10.5" stroke="#fff" stroke-width="2"/></svg>
<div class="t" style="left:611px;top:954px;font-size:14px">0</div>
<svg style="left:647px;top:955px" width="15" height="14" viewBox="0 0 15 14"><path d="M7.5 0.5 L14.5 13.5 H0.5 Z" fill="#F7C81B" stroke="#F0B000" stroke-width="1" stroke-linejoin="round"/><path d="M7.5 4.5 V9" stroke="#1E1E1E" stroke-width="1.6"/><circle cx="7.5" cy="11.2" r=".9" fill="#1E1E1E"/></svg>
<div class="t" style="left:668px;top:954px;font-size:14px">1</div>
<svg style="left:716px;top:957px" width="13" height="11" viewBox="0 0 13 11"><path d="M13 5.5 H2 M6 1 L1.5 5.5 L6 10" fill="none" stroke="#1A5FB4" stroke-width="2"/></svg>
<svg style="left:751px;top:957px" width="13" height="11" viewBox="0 0 13 11"><path d="M0 5.5 H11 M7 1 L11.5 5.5 L7 10" fill="none" stroke="#1A5FB4" stroke-width="2"/></svg>
<div class="a" style="left:785px;top:954px;width:1px;height:18px;background:#CCCEDB"></div>
<svg style="left:803px;top:954px" width="17" height="17" viewBox="0 0 17 17"><path d="M9 1 L16 5 L12 9 L7 12 L4 16 L1 12 L5 9 L8 4 Z" fill="#717171"/><path d="M11 3 L14 6" stroke="#fff" stroke-width="1"/></svg>
<svg style="left:825px;top:960px" width="8" height="5" viewBox="0 0 8 5"><path d="M0 0 H8 L4 5 Z" fill="#1E1E1E"/></svg>
<!-- ===== TOOLTIP ===== -->
<div class="a" style="left:970px;top:594px;width:948px;height:158px;background:#F5F5F5;border:1px solid #CCCEDB"></div>
<svg style="left:987px;top:608px" width="11" height="12" viewBox="0 0 11 12"><path d="M5.5 0.8 L10.2 3.3 V8.7 L5.5 11.2 L0.8 8.7 V3.3 Z M0.8 3.3 L5.5 5.8 L10.2 3.3 M5.5 5.8 V11.2" fill="none" stroke="#8B70C0" stroke-width="1.1"/></svg>
<div id="tip" class="a" style="left:986px;top:625px;font-size:14.8px;line-height:20px;white-space:pre;color:#1E1E1E">
<div class="tl" style="top:0"><span class="ty">AndConstraint</span>&lt;FluentAssertions.Collections.<span class="ty">GenericCollectionAssertions</span>&lt;<span class="k" style="color:#0000C0">int</span>&gt;&gt;</div>
<div class="tl" style="top:20px">FluentAssertions.Collections.<span class="ty">CollectionAssertions</span>&lt;<span class="ty">IEnumerable</span>&lt;<span class="k" style="color:#0000C0">int</span>&gt;,</div>
<div class="tl" style="top:40px">FluentAssertions.Collections.<span class="ty">GenericCollectionAssertions</span>&lt;<span class="k" style="color:#0000C0">int</span>&gt;&gt;.<span class="m">BeInAscendingOrder</span>([<span class="k" style="color:#0000C0">string</span> <span class="id">because</span> = ""], <span class="k" style="color:#0000C0">params object</span>[] <span class="id">becauseArgs</span>) (+</div>
<div class="tl" style="top:60px">4 overloads)</div>
<div class="tl" style="top:80px">Expects the current collection to have all elements in ascending order. Elements are compared using their System.<span class="ty">IComparable</span>.<span class="m">CompareTo</span></div>
<div class="tl" style="top:100px">(<span class="k" style="color:#0000C0">object</span>) implementation.</div>
</div>
<!-- ===== STATUS BAR ===== -->
<div class="a" style="left:0;top:1013px;width:1920px;height:27px;background:#007ACC"></div>
<svg style="left:5px;top:1021px" width="21" height="14" viewBox="0 0 21 14"><path d="M5 1 H20 L16 13 H1 Z" fill="none" stroke="#fff" stroke-width="1.5"/></svg>
<div class="t" style="left:35px;top:1018px;color:#fff">Ready</div>
<div class="t" style="left:802px;top:1018px;color:#fff">Ln 421</div>
<div class="t" style="left:916px;top:1018px;color:#fff">Col 46</div>
<div class="t" style="left:1030px;top:1018px;color:#fff">Ch 46</div>
<div class="t" style="left:1199px;top:1018px;color:#fff">INS</div>
<svg style="left:1290px;top:1021px" width="11" height="14" viewBox="0 0 11 14"><path d="M5.5 14 V2 M1 6 L5.5 1.5 L10 6" fill="none" stroke="#fff" stroke-width="1.8"/></svg>
<div class="t" style="left:1315px;top:1018px;color:#fff">0</div>
<svg style="left:1353px;top:1021px" width="15" height="14" viewBox="0 0 15 14"><path d="M1 13 L2 9.5 L10 1.5 L13 4.5 L5 12.5 Z" fill="#fff"/></svg>
<div class="t" style="left:1377px;top:1018px;color:#fff">1</div>
<svg style="left:1413px;top:1019px" width="19" height="18" viewBox="0 0 19 18"><path d="M9.5 0.5 L18.5 9 L9.5 17.5 L0.5 9 Z" fill="#fff"/><path d="M6 5.5 L9.5 9 V13 M9.5 9 L13 5.5" fill="none" stroke="#007ACC" stroke-width="1.6"/><circle cx="9.5" cy="13" r="1.3" fill="#007ACC"/></svg>
<div class="t" style="left:1439px;top:1018px;color:#fff">KL01</div>
<svg style="left:1498px;top:1020px" width="17" height="16" viewBox="0 0 17 16"><path d="M8.5 15 V8 L2 1.5 M8.5 8 L15 1.5" fill="none" stroke="#fff" stroke-width="2"/><circle cx="2" cy="2" r="1.7" fill="#fff"/><circle cx="15" cy="2" r="1.7" fill="#fff"/></svg>
<div class="t" style="left:1525px;top:1018px;color:#fff;letter-spacing:-0.15px">KL/04B_NUnit_KL/00_Main</div>
<svg style="left:1707px;top:1024px" width="11" height="7" viewBox="0 0 11 7"><path d="M0 6.5 L5.5 0.5 L11 6.5 Z" fill="#fff"/></svg>
<svg style="left:1749px;top:1019px" width="16" height="17" viewBox="0 0 16 17"><path d="M8 1 C4 1 3 4 3 7 V11 L1 13 H15 L13 11 V7 C13 4 12 1 8 1 Z" fill="#D8D8D8"/><path d="M6 14.5 Q8 17 10 14.5" fill="#D8D8D8"/></svg>
<div class="a" style="left:1760px;top:1026px;width:14px;height:14px;border-radius:50%;background:#E51400"></div>
<div class="t" style="left:1760px;top:1023px;width:14px;text-align:center;color:#fff;font-size:11px;line-height:17px">4</div>
<svg style="left:1801px;top:1017px" width="19" height="21" viewBox="0 0 19 21"><path d="M4.5 9 H17.5 L15 19 H2 Z" fill="none" stroke="#fff" stroke-width="1.5" stroke-linejoin="round"/><path d="M9.5 1.5 L12.5 1.5 L11 10 H13.5 L12.5 14.5 H6.5 L7.5 10 H9 Z" fill="#F0A23A"/></svg>
<svg style="left:1828px;top:1017px" width="22" height="22" viewBox="0 0 22 22"><circle cx="11" cy="11" r="9.7" fill="#fff" stroke="#1E1E1E" stroke-width="1.5"/><path d="M11 4.5 V15 M6.5 11 L11 15.5 L15.5 11" fill="none" stroke="#1E1E1E" stroke-width="2"/></svg>
<svg style="left:1862px;top:1017px" width="23" height="23" viewBox="0 0 23 23"><circle cx="11" cy="11" r="9.7" fill="#fff" stroke="#555" stroke-width="1.5"/><circle cx="18" cy="18" r="4.5" fill="#1E1E1E" stroke="#fff" stroke-width="1"/><path d="M18 16 V19.5" stroke="#fff" stroke-width="1.2"/></svg>
<svg style="left:1893px;top:1017px" width="24" height="23" viewBox="0 0 24 23"><circle cx="12" cy="11.5" r="10.5" fill="#2EA043" stroke="#fff" stroke-width="1.5"/><path d="M6.5 11.5 L10.5 15.5 L17.5 6.5" fill="none" stroke="#fff" stroke-width="2.6"/></svg>
<div class="a" style="left:0;top:1040px;width:1920px;height:40px;background:#000"></div>
</body></html>
